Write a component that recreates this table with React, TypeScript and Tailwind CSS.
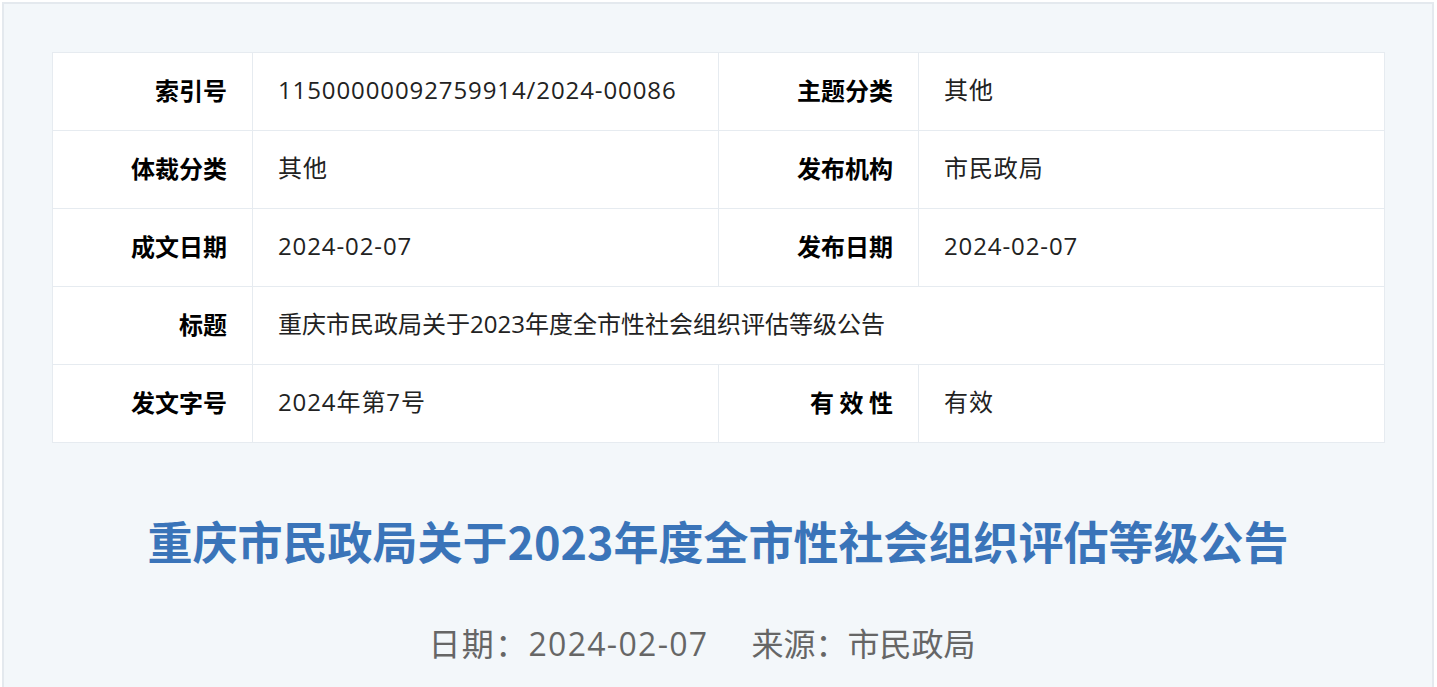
const rows: [string, string, string?, string?][] = [
  ['索引号', '11500000092759914/2024-00086', '主题分类', '其他'],
  ['体裁分类', '其他', '发布机构', '市民政局'],
  ['成文日期', '2024-02-07', '发布日期', '2024-02-07'],
  ['标题', '重庆市民政局关于2023年度全市性社会组织评估等级公告'],
  ['发文字号', '2024年第7号', '有 效 性', '有效'],
];

const font = { fontFamily: '"Microsoft YaHei", "Noto Sans CJK SC", "Noto Sans", sans-serif' };
const valFont = { fontFamily: '"Open Sans", "Noto Sans CJK SC", sans-serif' };

export default function App() {
  return (
    <div className="w-[1437px] h-[687px] bg-white overflow-hidden" style={font}>
      <div className="ml-[2px] mt-[2px] w-[1432px] h-[700px] border-t-2 border-l-2 border-r-2 border-[#e4e9ee] bg-[#f3f7fa] px-[48px] pt-[48px]">
        <table className="w-[1333px] border-collapse bg-white text-[24px] text-[#222]">
          <tbody>
            {rows.map(([l1, v1, l2, v2]) => (
              <tr key={l1} className="h-[78px]">
                <th className="w-[200px] border border-[#e6ebf0] pr-[25px] pb-[3px] text-right font-bold text-black whitespace-pre">{l1}</th>
                {l2 ? (
                  <>
                    <td className="w-[466px] border border-[#e6ebf0] pl-[25px] pb-[3px] tracking-[0.9px]" style={valFont}>{v1}</td>
                    <th className="w-[200px] border border-[#e6ebf0] pr-[25px] pb-[3px] text-right font-bold text-black whitespace-pre">{l2}</th>
                    <td className="border border-[#e6ebf0] pl-[25px] pb-[3px] tracking-[0.9px]" style={valFont}>{v2}</td>
                  </>
                ) : (
                  <td colSpan={3} className="border border-[#e6ebf0] pl-[25px] pb-[3px]" style={valFont}>{v1}</td>
                )}
              </tr>
            ))}
          </tbody>
        </table>
        <h1 className="mt-[75px] text-center text-[45px] font-bold leading-none text-[#3a74b9]">
          重庆市民政局关于2023年度全市性社会组织评估等级公告
        </h1>
        <div className="mt-[65px] pr-[32px] flex justify-center gap-[43px] text-[32px] leading-none text-[#666]" style={valFont}>
          <span className="tracking-[1.3px]">日期：2024-02-07</span>
          <span>来源：市民政局</span>
        </div>
      </div>
    </div>
  );
}
